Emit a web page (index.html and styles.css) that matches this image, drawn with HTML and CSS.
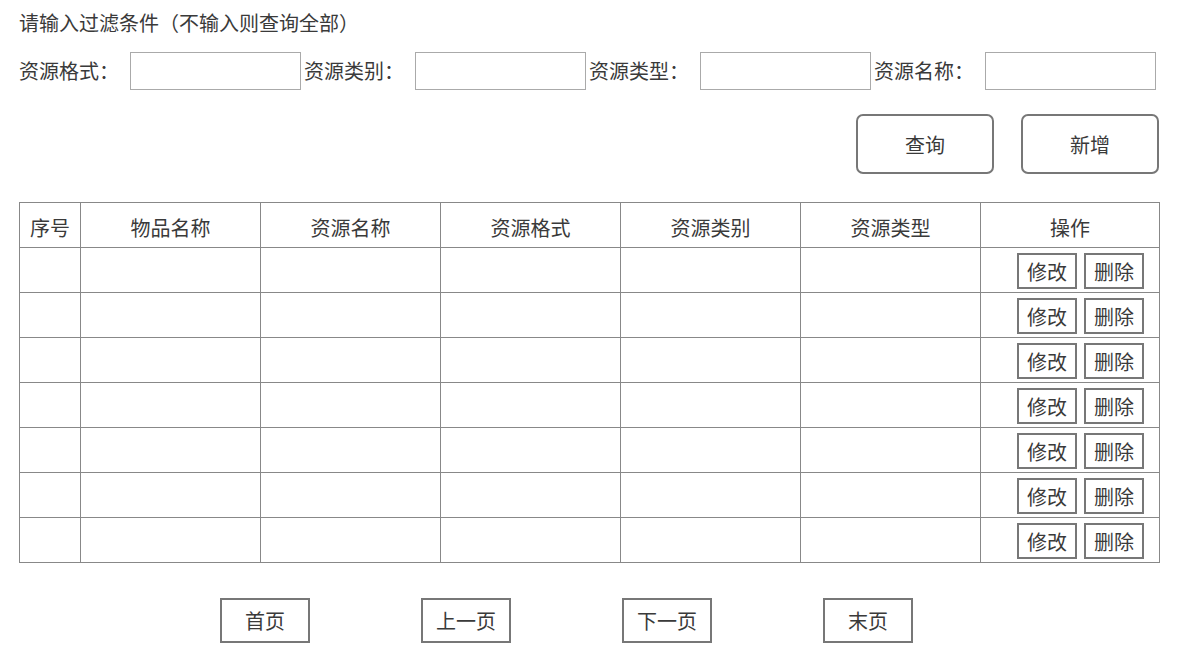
FILE: index.html
```html
<!DOCTYPE html>
<html lang="zh-CN">
<head>
  <meta charset="UTF-8" />
  <title>资源管理</title>
  <link rel="stylesheet" href="styles.css">
</head>
<body>
  <div class="page">
    <p class="tip">请输入过滤条件（不输入则查询全部）</p>

    <div class="filters">
      <div class="field"><label>资源格式：</label><input type="text"></div>
      <div class="field"><label>资源类别：</label><input type="text"></div>
      <div class="field"><label>资源类型：</label><input type="text"></div>
      <div class="field"><label>资源名称：</label><input type="text"></div>
    </div>

    <div class="actions">
      <button class="big-btn">查询</button>
      <button class="big-btn">新增</button>
    </div>

    <table class="grid">
      <colgroup>
        <col style="width:61px"><col style="width:180px"><col style="width:180px"><col style="width:180px">
        <col style="width:180px"><col style="width:180px"><col style="width:179px">
      </colgroup>
      <thead>
        <tr><th>序号</th><th>物品名称</th><th>资源名称</th><th>资源格式</th><th>资源类别</th><th>资源类型</th><th>操作</th></tr>
      </thead>
      <tbody id="rows"></tbody>
    </table>

    <div class="pager">
      <button class="page-btn">首页</button>
      <button class="page-btn">上一页</button>
      <button class="page-btn">下一页</button>
      <button class="page-btn">末页</button>
    </div>
  </div>

  <script>
    const body = document.getElementById('rows');
    let html = '';
    for (let i = 0; i < 7; i++) {
      html += '<tr><td></td><td></td><td></td><td></td><td></td><td></td>' +
        '<td class="ops"><button class="row-btn">修改</button><button class="row-btn">删除</button></td></tr>';
    }
    body.innerHTML = html;
  </script>
</body>
</html>
```

FILE: styles.css
```css
body {
  margin: 0;
  font-family: "Noto Sans CJK SC", "Noto Sans", sans-serif;
  font-size: 20px;
  color: #3a3a3a;
  background-color: #fff;
}

.page {
  padding: 8px 26px 0 19px;
}

.tip {
  margin: 0;
  line-height: 30px;
}

.filters {
  display: flex;
  margin-top: 14px;
}

.field {
  display: flex;
  align-items: center;
  margin-right: 3px;
}

.field label {
  width: 111px;
  line-height: 38px;
  white-space: nowrap;
}

.field input {
  box-sizing: border-box;
  width: 171px;
  height: 38px;
  margin: 0;
  border: 1px solid #aaa;
  padding: 0 6px;
  font: inherit;
}

.actions {
  display: flex;
  justify-content: flex-end;
  gap: 27px;
  margin-top: 24px;
}

.big-btn {
  box-sizing: border-box;
  width: 138px;
  height: 60px;
  border: 2px solid #777;
  border-radius: 7px;
  background: #fff;
  color: #3a3a3a;
  font: inherit;
  cursor: pointer;
}

.grid {
  margin-top: 28px;
  width: 1140px;
  table-layout: fixed;
  border-collapse: collapse;
}

.grid th,
.grid td {
  border: 1px solid #888;
  height: 44px;
  padding: 0;
  font-weight: normal;
  text-align: center;
}

.grid th {
  padding-top: 4px;
  height: 40px;
}

.grid td.ops {
  text-align: right;
  padding-right: 15px;
  padding-top: 2px;
  height: 42px;
}

.row-btn {
  box-sizing: border-box;
  width: 60px;
  height: 36px;
  margin-left: 7px;
  border: 2px solid #777;
  background: #fff;
  color: #3a3a3a;
  font: inherit;
  padding: 0;
  vertical-align: middle;
}

.pager {
  display: flex;
  gap: 111px;
  margin-top: 35px;
  padding-left: 201px;
}

.page-btn {
  box-sizing: border-box;
  width: 90px;
  height: 45px;
  border: 2px solid #777;
  background: #fff;
  color: #3a3a3a;
  font: inherit;
  padding: 0;
}
```
